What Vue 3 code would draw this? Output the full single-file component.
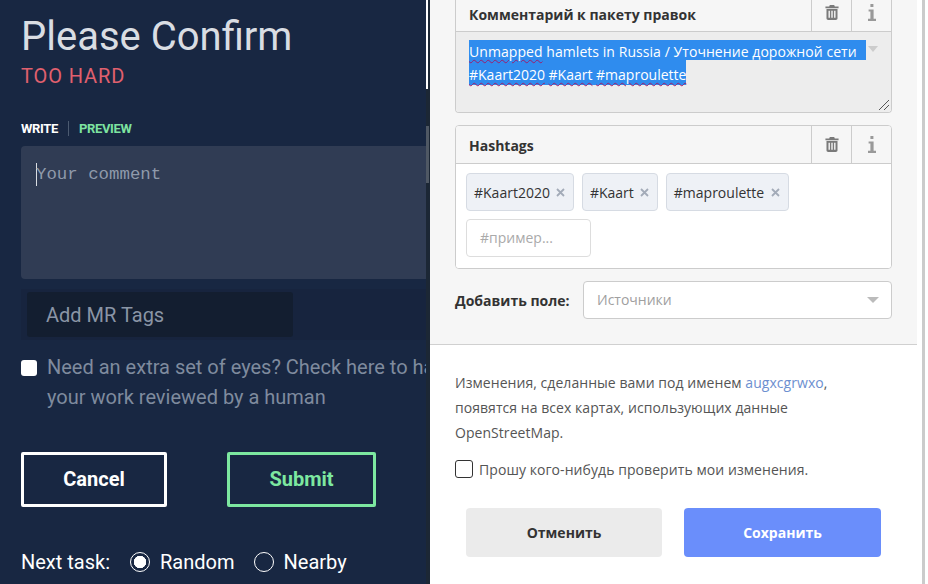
<script setup>
// left: task completion form, right: changeset save panel
const tags = ['#Kaart2020', '#Kaart', '#maproulette']
</script>

<template>
  <div class="page">
    <section class="task">
      <h1 class="title">Please Confirm</h1>
      <div class="status">TOO HARD</div>
      <div class="tabs">
        <span class="tab-write">WRITE</span>
        <span class="tab-preview">PREVIEW</span>
      </div>
      <div class="comment"><i class="caret"></i>Your comment</div>
      <div class="tag-band"><div class="tag-input">Add MR Tags</div></div>
      <div class="review">
        <span class="review-box"></span>
        <p>Need an extra set of eyes? Check here to have<br>your work reviewed by a human</p>
      </div>
      <div class="actions">
        <div class="btn btn-cancel">Cancel</div>
        <div class="btn btn-submit">Submit</div>
      </div>
      <div class="next">
        <span class="next-label">Next task:</span>
        <span class="radio on"></span><span class="radio-text">Random</span>
        <span class="radio second"></span><span class="radio-text">Nearby</span>
      </div>
    </section>
    <div class="gutter">
      <div class="gutter-white"></div>
      <div class="gutter-thumb"></div>
    </div>

    <section class="save">
      <div class="fields">
        <div class="field first">
          <div class="field-head">
            <span class="field-label">Комментарий к пакету правок</span>
            <span class="head-btn">
              <svg width="14" height="17" viewBox="0 0 16 17"><path fill="#7a7a7a" d="M5.500 0h5l.7 1.600H15.500v2H.5v-2h4.300zM1.700 4.600h12.600V15c0 1.100-.8 2-2 2H3.700c-1.200 0-2-.9-2-2zm2.300 2v8h1.600v-8zm3.200 0v8h1.600v-8zm3.200 0v8H12v-8z"/></svg>
            </span>
            <span class="head-btn">
              <svg width="8" height="17" viewBox="0 0 8 17"><path fill="#999" d="M2.400 0h3v3h-3zM.6 5.400h5v9.400H8V17H0v-2.200h2.400V7.600H.6z"/></svg>
            </span>
          </div>
          <div class="changeset">
            <div class="sel sel-one"><u>Unmapped</u> hamlets in Russia / Уточнение дорожной сети</div>
            <div class="sel sel-two"><u>#Kaart2020</u> <u>#Kaart</u> <u>#maproulette</u></div>
            <span class="mini-arrow"></span>
            <svg class="grip" width="12" height="12" viewBox="0 0 12 12"><path stroke="#555" fill="none" d="M1 11 11 1M6 11l5-5"/></svg>
          </div>
        </div>

        <div class="field">
          <div class="field-head head-tall">
            <span class="field-label">Hashtags</span>
            <span class="head-btn">
              <svg width="14" height="17" viewBox="0 0 16 17"><path fill="#7a7a7a" d="M5.500 0h5l.7 1.600H15.500v2H.5v-2h4.300zM1.700 4.600h12.600V15c0 1.100-.8 2-2 2H3.700c-1.200 0-2-.9-2-2zm2.300 2v8h1.600v-8zm3.200 0v8h1.600v-8zm3.200 0v8H12v-8z"/></svg>
            </span>
            <span class="head-btn">
              <svg width="8" height="17" viewBox="0 0 8 17"><path fill="#999" d="M2.400 0h3v3h-3zM.6 5.400h5v9.400H8V17H0v-2.200h2.400V7.600H.6z"/></svg>
            </span>
          </div>
          <div class="tag-body">
            <div v-for="t in tags" :key="t" class="chip">
              {{ t }}
              <svg width="9" height="9" viewBox="0 0 9 9"><path stroke="#a3abb8" stroke-width="1.800" d="M1 1l7 7M8 1 1 8"/></svg>
            </div>
            <div class="chip-input">#пример...</div>
          </div>
        </div>

        <div class="add-field">
          <span class="add-label">Добавить поле:</span>
          <div class="add-select">Источники<span class="arrow"></span></div>
        </div>
      </div>

      <div class="footer">
        <p class="note">Изменения, сделанные вами под именем <a>augxcgrwxo</a>,<br>появятся на всех картах, использующих данные<br>OpenStreetMap.</p>
        <div class="ask"><span class="ask-box"></span>Прошу кого-нибудь проверить мои изменения.</div>
        <div class="save-actions">
          <div class="s-btn s-cancel">Отменить</div>
          <div class="s-btn s-save">Сохранить</div>
        </div>
      </div>
    </section>
    <div class="edge"></div>
  </div>
</template>

<style>
html, body { margin: 0; background: #fff; }
</style>

<style scoped>
.page {
  display: flex; width: 928px; height: 584px; overflow: hidden;
  font-family: "Open Sans", "Noto Sans", sans-serif;
}

/* left panel */
.task {
  width: 405px; padding-left: 21px; flex: none; overflow: hidden;
  background: #182742; color: #fff; font-family: Roboto, sans-serif;
}
.title { margin: 13px 0 0; font-size: 40px; line-height: 48px; font-weight: 400; color: #d9dde3; white-space: nowrap; }
.status { margin-top: 3px; font-size: 20px; line-height: 24px; letter-spacing: .9px; color: #e0606e; }
.tabs { display: flex; align-items: center; margin-top: 32px; height: 16px; font-size: 13px; font-weight: 700; }
.tab-write { padding-right: 10px; border-right: 1px solid #4b5a70; letter-spacing: -.35px; }
.tab-preview { padding-left: 10px; color: #7de3a0; letter-spacing: -.35px; }
.comment {
  display: flex; align-items: flex-start; box-sizing: border-box; height: 133px; margin-top: 10px; padding: 17px 0 0 15px;
  background: #303c54; border-radius: 4px 0 0 4px; color: #8f9aab;
  font-family: "Liberation Mono", monospace; font-size: 17.4px; line-height: 23px;
}
.caret { width: 1px; height: 23px; margin-right: -1px; background: #d9dde3; }
.tag-band { margin-top: 10px; padding: 3px 6px; background: #17243e; }
.tag-input {
  box-sizing: border-box; width: 266px; height: 45px; padding-left: 19px; line-height: 47px;
  background: #131e30; border-radius: 3px; color: #8a95a6; font-size: 20px;
}
.review { display: flex; margin-top: 19px; white-space: nowrap; }
.review-box { width: 16px; height: 16px; margin-top: 1px; background: #fff; border-radius: 3px; flex: none; }
.review p { margin: -7px 0 0 10px; font-size: 20px; line-height: 30px; color: #7f8b9e; }
.actions { display: flex; margin-top: 40px; }
.btn {
  box-sizing: border-box; height: 55px; border: 3px solid; border-radius: 2px;
  text-align: center; font-size: 20px; font-weight: 700; line-height: 49px;
}
.btn-cancel { width: 146px; border-color: #fff; }
.btn-submit { width: 149px; margin-left: 60px; border-color: #7de8a0; color: #7de8a0; }
.next { display: flex; align-items: center; margin-top: 41px; height: 28px; font-size: 20px; white-space: nowrap; }
.next-label { margin-right: 20px; }
.radio { box-sizing: border-box; width: 20px; height: 20px; border: 1px solid #fff; border-radius: 50%; margin-right: 10px; }
.radio.on { background: radial-gradient(circle, #fff 0 6px, transparent 6.5px); }
.radio.second { margin-left: 19px; }

.gutter { width: 4px; flex: none; background: #1c2735; }
.gutter-white { width: 2px; height: 89px; background: #fff; }
.gutter-thumb { width: 3px; height: 57px; margin-top: 37px; background: #4f5864; }

/* right panel */
.save { width: 487px; flex: none; background: #fff; }
.fields { box-sizing: border-box; height: 346px; padding: 0 25px; background: #f6f6f6; border-bottom: 1px solid #d0d0d0; }
.field { box-sizing: border-box; width: 437px; margin-top: 12px; background: #fff; border: 1px solid #ccc; border-radius: 4px; overflow: hidden; }
.field.first { margin-top: -1px; border-top: 0; border-radius: 0 0 4px 4px; }
.field-head { display: flex; height: 33px; background: #f6f6f6; border-bottom: 1px solid #ccc; box-sizing: border-box; }
.head-tall { height: 38px; }
.field-label { flex: 1; padding-left: 13px; font-size: 14px; font-weight: 700; line-height: 32px; color: #333; }
.head-tall .field-label { line-height: 40px; }
.head-btn { display: flex; justify-content: center; padding-top: 5px; border-left: 1px solid #ccc; box-sizing: border-box; width: 40px; }
.head-tall .head-btn { padding-top: 10px; }
.changeset { position: relative; box-sizing: border-box; height: 80px; padding: 8px 0 0 13px; background: #ededed; font-size: 14px; color: #fff; }
.sel { width: fit-content; background: #2f8cee; white-space: nowrap; }
.sel-one { height: 20px; line-height: 24px; padding-right: 9px; letter-spacing: .06px; }
.sel-two { height: 25px; line-height: 30px; }
.sel u { text-decoration: underline wavy #9c1c6c 1px; text-underline-offset: 2px; }
.mini-arrow { position: absolute; left: 412px; top: 14px; border: 5px solid transparent; border-top: 6px solid #ccc; }
.grip { position: absolute; right: 1px; bottom: 1px; }
.tag-body { display: flex; flex-wrap: wrap; gap: 8px 7.500px; padding: 9px 10px; background: #fff; height: 104px; box-sizing: border-box; align-content: flex-start; }
.chip {
  display: flex; align-items: center; gap: 6.500px; box-sizing: border-box; height: 38px; padding: 0 8px 0 7px;
  background: #eef1f6; border: 1px solid #d6dbe3; border-radius: 4px; font-size: 14px; color: #333;
}
.chip-input { box-sizing: border-box; width: 125px; height: 38px; padding-left: 13px; border: 1px solid #ddd; border-radius: 4px; line-height: 36px; font-size: 14px; color: #aaa; }
.add-field { display: flex; align-items: center; margin-top: 12px; }
.add-label { width: 128px; font-size: 14px; font-weight: 700; color: #333; }
.add-select { position: relative; box-sizing: border-box; width: 309px; height: 38px; padding-left: 13px; line-height: 36px; background: #fff; border: 1px solid #ccc; border-radius: 4px; font-size: 14px; color: #a0a0a0; }
.arrow { position: absolute; right: 12px; top: 15px; border: 6px solid transparent; border-top: 6px solid #bbb; }
.footer { padding: 25px 26px 0 25px; }
.note { margin: 0; font-size: 14px; line-height: 25px; color: #555; letter-spacing: .05px; }
.note a { color: #6d8fd0; }
.ask { display: flex; align-items: center; margin-top: 13px; height: 22px; font-size: 14px; color: #555; letter-spacing: .07px; }
.ask-box { box-sizing: border-box; width: 18px; height: 18px; margin-right: 6px; border: 1px solid #333; border-radius: 3px; }
.save-actions { display: flex; gap: 22px; margin: 28px 0 0 11px; }
.s-btn { width: 197px; height: 49px; border-radius: 4px; text-align: center; font-size: 14px; font-weight: 700; line-height: 49px; }
.s-cancel { width: 196px; background: #ebebeb; color: #333; }
.s-save { background: #6a8efb; color: #fff; }

.edge { width: 5px; flex: none; background: #fff; border-right: 3px solid #cbcbcb; }
</style>
